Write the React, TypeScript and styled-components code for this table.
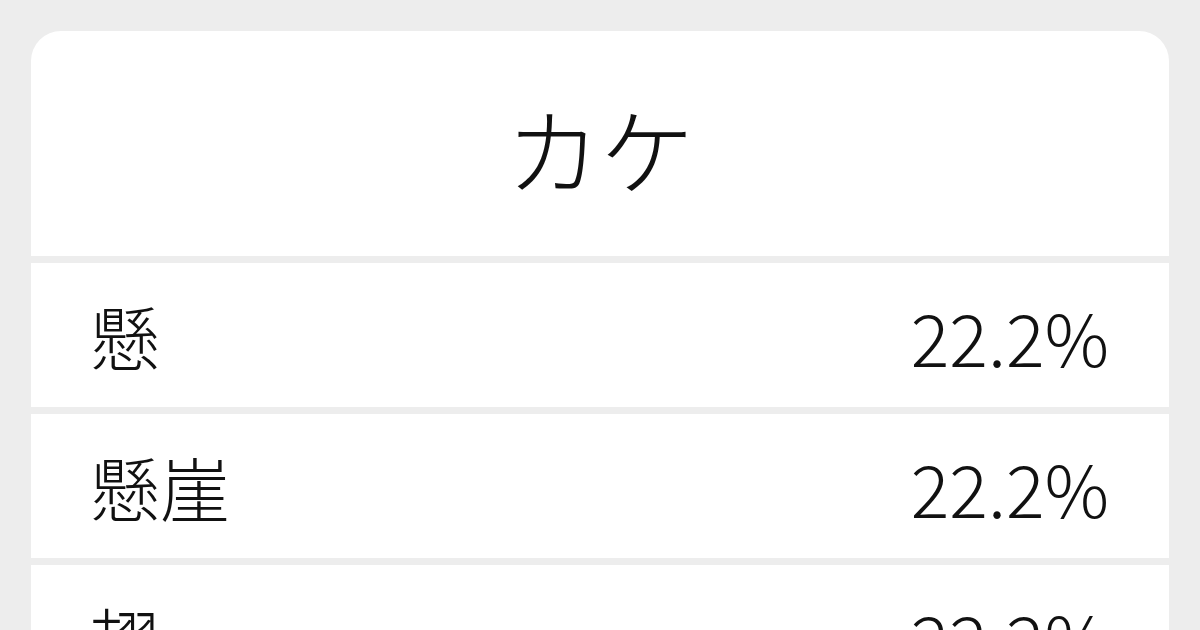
import React from "react";
import styled, { createGlobalStyle } from "styled-components";

const rows = [
  { word: "懸", rate: "22.2%" },
  { word: "懸崖", rate: "22.2%" },
  { word: "翅", rate: "22.2%" },
];

const App: React.FC = () => {
  return (
    <>
      <Global />
      <Page>
        <Card>
          <Header>カケ</Header>
          {rows.map((r) => (
            <Row key={r.word}>
              <Word>{r.word}</Word>
              <Rate>{r.rate}</Rate>
            </Row>
          ))}
        </Card>
      </Page>
    </>
  );
};

export default App;

const Global = createGlobalStyle`
  html, body {
    margin: 0;
    background: #ededed;
  }
  body {
    font-family: "Noto Sans CJK JP", "Noto Sans", sans-serif;
    color: #111;
  }
`;

const Page = styled.div`
  width: 1200px;
  height: 630px;
  box-sizing: border-box;
  padding: 31px 31px 0;
  overflow: hidden;
`;

const Card = styled.div`
  display: flex;
  flex-direction: column;
  gap: 7px;
  border-radius: 30px 30px 0 0;
  overflow: hidden;
`;

const Header = styled.div`
  height: 225px;
  background: #fff;
  display: flex;
  align-items: center;
  justify-content: center;
  font-size: 94px;
  font-weight: 300;
  padding-top: 6px;
  box-sizing: border-box;
  flex-shrink: 0;
`;

const Row = styled.div`
  height: 144px;
  background: #fff;
  display: flex;
  align-items: center;
  justify-content: space-between;
  padding: 0 60px 0 59px;
  font-size: 72px;
  font-weight: 300;
  flex-shrink: 0;
`;

const Word = styled.span`
  font-size: 70px;
`;

const Rate = styled.span``;
